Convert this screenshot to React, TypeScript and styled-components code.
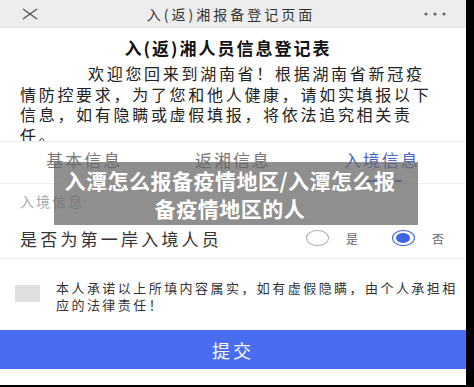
import styled, { createGlobalStyle } from "styled-components";

const GlobalStyle = createGlobalStyle`
  html, body {
    margin: 0;
    padding: 0;
    background: #000;
  }
  body {
    font-family: "Noto Sans CJK SC", "Noto Sans", sans-serif;
  }
`;

const tabs = ["基本信息", "返湘信息", "入境信息"];

export default function App() {
  return (
    <>
      <GlobalStyle />
      <Page>
        <TopBar>
          <CloseIcon viewBox="0 0 16 12">
            <path d="M1 1 L15 11 M15 1 L1 11" />
          </CloseIcon>
          <BarTitle>入(返)湘报备登记页面</BarTitle>
          <MoreIcon viewBox="0 0 22 4">
            <circle cx="2" cy="2" r="1.6" />
            <circle cx="11" cy="2" r="1.6" />
            <circle cx="20" cy="2" r="1.6" />
          </MoreIcon>
        </TopBar>

        <Intro>
          <Heading>入(返)湘人员信息登记表</Heading>
          <Notice>
            欢迎您回来到湖南省！根据湖南省新冠疫情防控要求，为了您和他人健康，请如实填报以下信息，如有隐瞒或虚假填报，将依法追究相关责任。
          </Notice>
        </Intro>

        <Tabs>
          {tabs.map((t, i) => (
            <Tab key={t} $active={i === 2}>
              {t}
            </Tab>
          ))}
        </Tabs>

        <SectionLabel>入境信息</SectionLabel>

        <FieldRow>
          <FieldLabel>是否为第一岸入境人员</FieldLabel>
          <RadioGroup>
            <RadioOption>
              <Radio />
              <RadioText>是</RadioText>
            </RadioOption>
            <RadioOption>
              <Radio $checked />
              <RadioText>否</RadioText>
            </RadioOption>
          </RadioGroup>
        </FieldRow>

        <Pledge>
          <CheckBox />
          <PledgeText>
            本人承诺以上所填内容属实，如有虚假隐瞒，由个人承担相应的法律责任！
          </PledgeText>
        </Pledge>

        <SubmitButton>提交</SubmitButton>

        <Overlay>
          入潭怎么报备疫情地区/入潭怎么报
          <br />
          备疫情地区的人
        </Overlay>
      </Page>
    </>
  );
}

const Page = styled.div`
  position: relative;
  width: 466px;
  height: 385px;
  background: #fff;
  overflow: hidden;
  display: flex;
  flex-direction: column;
`;

const TopBar = styled.div`
  height: 28px;
  flex-shrink: 0;
  background: #ededed;
  border-bottom: 1px solid #e2e2e2;
  box-sizing: border-box;
  display: flex;
  align-items: center;
  padding: 0 20px 0 22px;
`;

const CloseIcon = styled.svg`
  width: 16px;
  height: 12px;
  fill: none;
  stroke: #555;
  stroke-width: 1.4;
`;

const BarTitle = styled.div`
  flex: 1;
  text-align: center;
  font-size: 14px;
  letter-spacing: 3px;
  color: #333;
`;

const MoreIcon = styled.svg`
  width: 22px;
  height: 4px;
  fill: #666;
`;

const Intro = styled.div`
  height: 114px;
  flex-shrink: 0;
  overflow: hidden;
  box-sizing: border-box;
  padding: 7px 24px 0 20px;
  border-bottom: 1px solid #eee;
`;

const Heading = styled.h1`
  margin: 0;
  text-align: center;
  font-size: 17px;
  line-height: 26px;
  font-weight: 700;
  letter-spacing: 2px;
  color: #111;
  padding-right: 6px;
`;

const Notice = styled.p`
  margin: 2px 0 0;
  font-size: 16px;
  line-height: 20.5px;
  letter-spacing: 2.7px;
  text-indent: 68px;
  color: #222;
`;

const Tabs = styled.div`
  height: 41px;
  flex-shrink: 0;
  display: flex;
  padding: 0 10px;
  border-bottom: 1px solid #eee;
`;

const Tab = styled.div<{ $active?: boolean }>`
  flex: 1;
  position: relative;
  display: flex;
  align-items: center;
  justify-content: center;
  font-size: 17px;
  letter-spacing: 2px;
  padding-bottom: 6px;
  color: ${(p) => (p.$active ? "#4a64c8" : "#777")};

  &::after {
    content: "";
    display: ${(p) => (p.$active ? "block" : "none")};
    position: absolute;
    bottom: 1px;
    left: 50%;
    width: 40px;
    margin-left: -20px;
    height: 2px;
    background: #4a64c8;
  }
`;

const SectionLabel = styled.div`
  height: 34px;
  flex-shrink: 0;
  display: flex;
  align-items: center;
  padding: 0 20px;
  font-size: 14px;
  letter-spacing: 2px;
  color: #aaa;
`;

const FieldRow = styled.div`
  height: 40px;
  flex-shrink: 0;
  display: flex;
  align-items: center;
  padding: 0 22px 0 20px;
  border-bottom: 1px solid #eee;
`;

const FieldLabel = styled.div`
  font-size: 17px;
  letter-spacing: 3.2px;
  color: #333;
`;

const RadioGroup = styled.div`
  margin-left: auto;
  display: flex;
  align-items: center;
  gap: 34px;
`;

const RadioOption = styled.div`
  display: flex;
  align-items: center;
  gap: 17px;
`;

const Radio = styled.span<{ $checked?: boolean }>`
  width: 23px;
  height: 16px;
  border-radius: 50%;
  border: 1px solid ${(p) => (p.$checked ? "#3b63e6" : "#a8b0c4")};
  box-sizing: border-box;
  background: #fff;
  display: flex;
  align-items: center;
  justify-content: center;

  &::after {
    content: "";
    display: ${(p) => (p.$checked ? "block" : "none")};
    width: 14px;
    height: 10px;
    border-radius: 50%;
    background: #3b63e6;
  }
`;

const RadioText = styled.span`
  font-size: 12px;
  color: #666;
`;

const Pledge = styled.div`
  flex-shrink: 0;
  display: flex;
  align-items: flex-start;
  gap: 16px;
  padding: 20px 4px 0 15px;
`;

const CheckBox = styled.span`
  width: 25px;
  height: 17px;
  margin-top: 6px;
  flex-shrink: 0;
  background: #e0e0e0;
`;

const PledgeText = styled.div`
  font-size: 13px;
  line-height: 17px;
  letter-spacing: 2.45px;
  color: #333;
`;

const SubmitButton = styled.button`
  margin-top: 17px;
  height: 39px;
  flex-shrink: 0;
  width: 100%;
  border: none;
  background: #4a6cf0;
  color: #fff;
  font-family: inherit;
  font-size: 18px;
  letter-spacing: 3px;
`;

const Overlay = styled.div`
  position: absolute;
  left: 54px;
  top: 162px;
  width: 364px;
  height: 63px;
  background: rgba(105, 105, 105, 0.75);
  color: #fff;
  font-size: 21px;
  font-weight: 700;
  line-height: 28px;
  letter-spacing: 0.5px;
  text-align: center;
  display: flex;
  flex-direction: column;
  justify-content: center;
  padding-right: 12px;
  box-sizing: border-box;
`;
